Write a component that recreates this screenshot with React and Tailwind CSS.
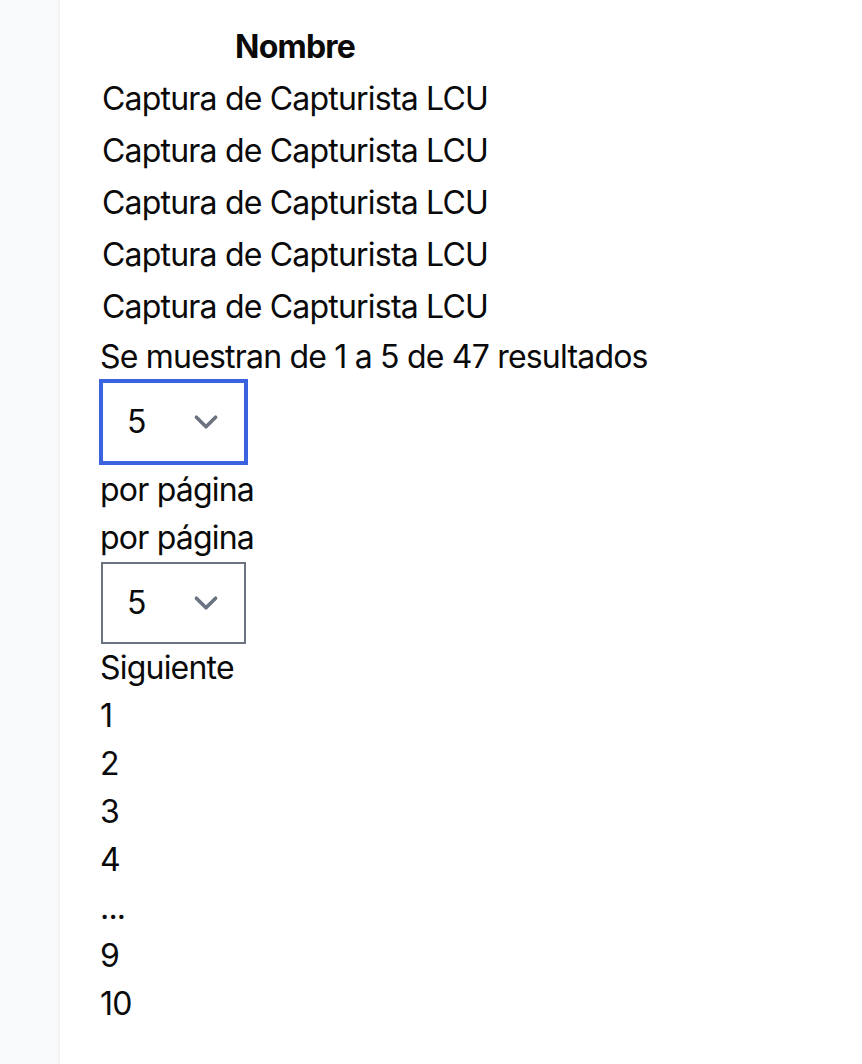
const rows = Array.from({ length: 5 }, () => "Captura de Capturista LCU");
const pages = ["1", "2", "3", "4", "...", "9", "10"];

const Chevron = () => (
  <svg viewBox="0 0 20 20" className="size-[48px]" fill="none">
    <path
      d="M6 8l4 4 4-4"
      stroke="#6b7280"
      strokeWidth="1.5"
      strokeLinecap="round"
      strokeLinejoin="round"
    />
  </svg>
);

const PerPage = ({ focused }) => (
  <div
    className={`flex h-[82px] w-[145px] items-center justify-between border-2 pl-[24px] pr-[14px] ${
      focused ? "border-[#3b63e0] ring-2 ring-[#3b63e0]" : "border-[#6b7280]"
    }`}
  >
    <span>5</span>
    <Chevron />
  </div>
);

export default function App() {
  return (
    <div className="flex min-h-[1064px] bg-white font-['Inter',sans-serif] text-[32px] leading-[48px] tracking-[-0.8px] text-[#0a0a0a]">
      {/* Sidebar */}
      <aside className="w-[60px] shrink-0 bg-[#f8f9fb] shadow-[inset_-3px_0_3px_-2px_rgba(0,0,0,0.04)]" />

      {/* Content */}
      <main className="flex-1 pl-[40px] pt-[21px]">
        <table>
          <thead>
            <tr>
              <th className="p-[2px] text-center font-bold">Nombre</th>
            </tr>
          </thead>
          <tbody>
            {rows.map((r, i) => (
              <tr key={i}>
                <td className="p-[2px]">{r}</td>
              </tr>
            ))}
          </tbody>
        </table>

        <p>Se muestran de 1 a 5 de 47 resultados</p>
        <div className="ml-[1px]">
          <PerPage focused />
        </div>
        <p className="mt-[3px]">por página</p>
        <p>por página</p>
        <div className="ml-[1px]">
          <PerPage />
        </div>
        <p>Siguiente</p>
        {pages.map((p) => (
          <p key={p}>{p}</p>
        ))}
      </main>
    </div>
  );
}
